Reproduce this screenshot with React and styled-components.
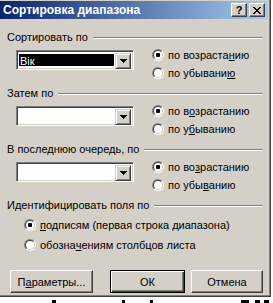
import React from 'react';
import styled, { createGlobalStyle } from 'styled-components';

const GlobalStyle = createGlobalStyle`
  html, body {
    margin: 0;
    padding: 0;
    background: #fff;
    overflow: hidden;
  }
  body {
    font-family: "Liberation Sans", Arial, sans-serif;
    font-size: 11px;
    color: #000;
  }
`;

const Dialog = styled.div`
  box-sizing: border-box;
  width: 275px;
  margin: -2px 0 0 -4px;
  padding: 2px;
  background: #d4d0c8;
  border: 1px solid;
  border-color: #d4d0c8 #404040 #404040 #d4d0c8;
  box-shadow: inset 1px 1px #fff, inset -1px -1px #808080;
`;

const TitleBar = styled.div`
  display: flex;
  align-items: center;
  height: 18px;
  padding: 0 3px 0 4px;
  background: linear-gradient(to right, #0a246a, #a6caf0);
  color: #fff;
  font-weight: bold;
  font-size: 12px;
`;

const TitleText = styled.div`
  flex: 1;
  white-space: nowrap;
`;

const TitleButtons = styled.div`
  display: flex;
  gap: 2px;
`;

const TitleButton = styled.div`
  box-sizing: border-box;
  width: 16px;
  height: 14px;
  display: flex;
  align-items: center;
  justify-content: center;
  background: #d4d0c8;
  color: #000;
  border: 1px solid;
  border-color: #fff #404040 #404040 #fff;
  box-shadow: inset -1px -1px #808080;
  font-size: 11px;
  font-weight: bold;
  line-height: 1;
`;

const Body = styled.div`
  padding: 12px 5px 1px 8px;
`;

const Group = styled.div`
  margin-bottom: ${p => p.$gap ?? 5}px;
`;

const GroupLabel = styled.div`
  display: flex;
  align-items: center;
  height: 13px;
  line-height: 13px;
  white-space: nowrap;
`;

const EtchedLine = styled.div`
  flex: 1;
  height: 0;
  margin-left: 5px;
  border-top: 1px solid #808080;
  border-bottom: 1px solid #fff;
`;

const SortRow = styled.div`
  display: flex;
  align-items: flex-start;
  margin-top: 2px;
`;

const ComboBox = styled.div`
  box-sizing: border-box;
  display: flex;
  width: 118px;
  height: 20px;
  margin: 4px 0 0 9px;
  padding: 2px;
  background: #fff;
  border: 1px solid;
  border-color: #808080 #fff #fff #808080;
  box-shadow: inset 1px 1px #404040, inset -1px -1px #d4d0c8;
`;

const ComboField = styled.div`
  flex: 1;
  display: flex;
  padding: 1px 1px 1px 0;
`;

const Selection = styled.div`
  flex: 1;
  background: ${p => (p.$active ? '#000' : 'transparent')};
  color: ${p => (p.$active ? '#fff' : '#000')};
  line-height: 14px;
  padding-left: 1px;
`;

const DropButton = styled.div`
  box-sizing: border-box;
  width: 16px;
  height: 16px;
  display: flex;
  align-items: center;
  justify-content: center;
  background: #d4d0c8;
  border: 1px solid;
  border-color: #d4d0c8 #404040 #404040 #d4d0c8;
  box-shadow: inset 1px 1px #fff, inset -1px -1px #808080;
`;

const RadioColumn = styled.div`
  display: flex;
  flex-direction: column;
  margin-left: ${p => p.$indent}px;
  margin-top: ${p => p.$top || 0}px;
`;

const RadioRow = styled.div`
  display: flex;
  align-items: center;
  height: ${p => p.$h || 18}px;
  white-space: nowrap;
`;

const RadioOuter = styled.span`
  box-sizing: border-box;
  width: 12px;
  height: 12px;
  margin-right: 4px;
  border-radius: 50%;
  border: 1px solid;
  border-color: #808080 #fff #fff #808080;
  display: flex;
`;

const RadioInner = styled.span`
  box-sizing: border-box;
  flex: 1;
  border-radius: 50%;
  border: 1px solid;
  border-color: #404040 #d4d0c8 #d4d0c8 #404040;
  background: #fff;
  display: flex;
  align-items: center;
  justify-content: center;
`;

const RadioDot = styled.span`
  width: 4px;
  height: 4px;
  border-radius: 1px;
  background: #000;
`;

const Accel = styled.span`
  text-decoration: underline;
  text-underline-offset: 1px;
`;

const ButtonRow = styled.div`
  display: flex;
  margin: 15px 0 0 3px;
`;

const PushButton = styled.div`
  box-sizing: border-box;
  width: ${p => p.$w}px;
  height: 23px;
  margin-left: ${p => p.$ml || 0}px;
  display: flex;
  align-items: center;
  justify-content: center;
  background: #d4d0c8;
  border: 1px solid;
  border-color: ${p => (p.$default ? '#000' : '#fff #404040 #404040 #fff')};
  box-shadow: ${p =>
    p.$default
      ? 'inset 1px 1px #fff, inset -1px -1px #404040, inset -2px -2px #808080'
      : 'inset -1px -1px #808080'};
`;

const SheetStrip = styled.div`
  display: flex;
  height: 7px;
  align-items: flex-end;
`;

const Ink = styled.span`
  width: ${p => p.$w}px;
  height: 4px;
  margin-left: ${p => p.$ml}px;
  background: #000;
`;

const Label = ({ text }) => {
  if (!text.accel) return <>{text}</>;
  const { pre, accel, post } = text;
  return (
    <>
      {pre}
      <Accel>{accel}</Accel>
      {post}
    </>
  );
};

const Radio = ({ checked, label, h }) => (
  <RadioRow $h={h}>
    <RadioOuter>
      <RadioInner>{checked && <RadioDot />}</RadioInner>
    </RadioOuter>
    <Label text={label} />
  </RadioRow>
);

const Arrow = () => (
  <svg width="7" height="4" viewBox="0 0 7 4" shapeRendering="crispEdges">
    <rect x="0" y="0" width="7" height="1" fill="#000" />
    <rect x="1" y="1" width="5" height="1" fill="#000" />
    <rect x="2" y="2" width="3" height="1" fill="#000" />
    <rect x="3" y="3" width="1" height="1" fill="#000" />
  </svg>
);

const CloseGlyph = () => (
  <svg width="8" height="7" viewBox="0 0 8 7" shapeRendering="crispEdges">
    <path
      d="M0 0h2v1h1v1h2V1h1V0h2v1H7v1H6v1H5v1h1v1h1v1h1v1H6V6H5V5H3v1H2v1H0V6h1V5h1V4h1V3H2V2H1V1H0z"
      fill="#000"
    />
  </svg>
);

const groups = [
  {
    title: 'Сортировать по',
    value: 'Вік',
    asc: { pre: 'по возраста', accel: 'н', post: 'ию' },
    desc: { pre: 'по убывани', accel: 'ю', post: '' },
  },
  {
    title: 'Затем по',
    value: '',
    asc: { pre: 'по в', accel: 'о', post: 'зрастанию' },
    desc: { pre: 'по у', accel: 'б', post: 'ыванию' },
  },
  {
    title: 'В последнюю очередь, по',
    value: '',
    asc: { pre: 'по во', accel: 'з', post: 'растанию' },
    desc: { pre: 'по убы', accel: 'в', post: 'анию' },
  },
];

const inkMarks = [
  { ml: 52, w: 4 },
  { ml: 66, w: 3 },
  { ml: 25, w: 3 },
  { ml: 88, w: 8 },
  { ml: 6, w: 5 },
  { ml: 4, w: 5 },
];

const App = () => (
  <>
    <GlobalStyle />
    <Dialog>
      <TitleBar>
        <TitleText>Сортировка диапазона</TitleText>
        <TitleButtons>
          <TitleButton>?</TitleButton>
          <TitleButton>
            <CloseGlyph />
          </TitleButton>
        </TitleButtons>
      </TitleBar>
      <Body>
        {groups.map(g => (
          <Group key={g.title}>
            <GroupLabel>
              {g.title}
              <EtchedLine />
            </GroupLabel>
            <SortRow>
              <ComboBox>
                <ComboField>
                  <Selection $active={!!g.value}>{g.value}</Selection>
                </ComboField>
                <DropButton>
                  <Arrow />
                </DropButton>
              </ComboBox>
              <RadioColumn $indent={18}>
                <Radio checked label={g.asc} />
                <Radio label={g.desc} />
              </RadioColumn>
            </SortRow>
          </Group>
        ))}
        <Group $gap={0}>
          <GroupLabel>
            Идентифицировать поля по
            <EtchedLine />
          </GroupLabel>
          <RadioColumn $indent={17} $top={3}>
            <Radio
              checked
              h={20}
              label={{ pre: '', accel: 'п', post: 'одписям (первая строка диапазона)' }}
            />
            <Radio h={20} label={{ pre: 'обозна', accel: 'ч', post: 'ениям столбцов листа' }} />
          </RadioColumn>
        </Group>
        <ButtonRow>
          <PushButton $w={83}>
            <Label text={{ pre: 'П', accel: 'а', post: 'раметры...' }} />
          </PushButton>
          <PushButton $w={75} $ml={17} $default>
            ОК
          </PushButton>
          <PushButton $w={72} $ml={6}>
            Отмена
          </PushButton>
        </ButtonRow>
      </Body>
    </Dialog>
    <SheetStrip>
      {inkMarks.map((m, i) => (
        <Ink key={i} $ml={m.ml} $w={m.w} />
      ))}
    </SheetStrip>
  </>
);

export default App;
